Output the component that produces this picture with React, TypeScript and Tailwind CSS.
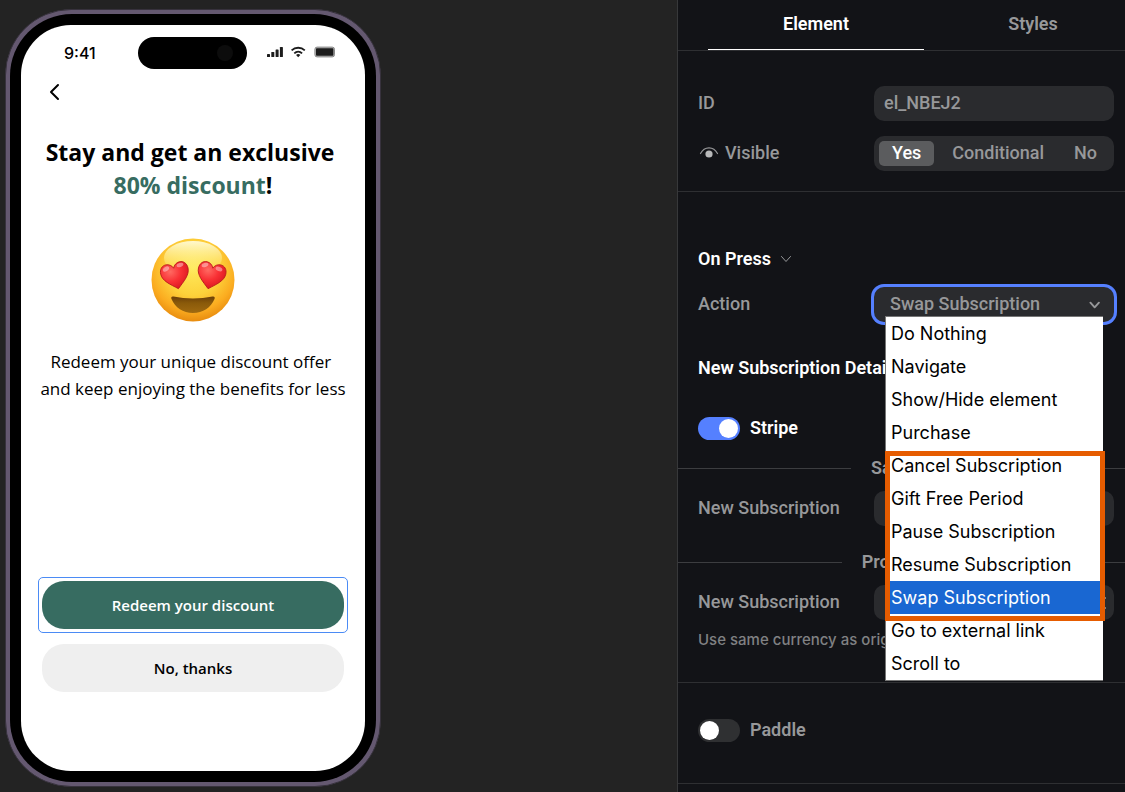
import { useState } from 'react'
import type { ReactNode } from 'react'

const beforeGroup = ['Do Nothing', 'Navigate', 'Show/Hide element', 'Purchase']
const highlighted = [
  'Cancel Subscription',
  'Gift Free Period',
  'Pause Subscription',
  'Resume Subscription',
  'Swap Subscription',
]
const afterGroup = ['Go to external link', 'Scroll to']

function StatusBar() {
  return (
    <div className="flex items-center pt-3 pl-[43px] pr-[29px]">
      <span className="w-[74px] font-['Inter',sans-serif] text-base font-medium text-black">9:41</span>
      <div className="flex h-8 w-[109px] items-center justify-end rounded-full bg-black pr-3.5">
        <div className="size-4 rounded-full bg-[#0c0c0c]" />
      </div>
      <svg className="ml-auto" width="70" height="14" viewBox="0 0 70 14" fill="#1c1c1c">
        <rect x="1" y="8" width="3" height="3" rx="0.6" />
        <rect x="5.3" y="6" width="3" height="5" rx="0.6" />
        <rect x="9.6" y="3.5" width="3" height="7.5" rx="0.6" />
        <rect x="13.9" y="1" width="3" height="10" rx="0.6" />
        <g fill="none" stroke="#1c1c1c" strokeWidth="1.8">
          <path d="M25.6 4.4a9.6 9.6 0 0 1 13.2 0" />
          <path d="M28.3 7.3a5.7 5.7 0 0 1 7.8 0" />
        </g>
        <path d="M32.2 11.2l-2.1-2.1a3 3 0 0 1 4.2 0z" />
        <rect x="48.9" y="1.1" width="19.600" height="9.8" rx="2.2" fill="#b5b5b5" stroke="#8a8a8a" strokeWidth="1" />
        <rect x="50" y="2.2" width="17.400" height="7.6" rx="0.8" />
      </svg>
    </div>
  )
}

function HeartEyes() {
  const heart = 'M0 13C-7 7-14 2-14-5c0-5 3-8 7-8 3 0 6 2 7 5 1-3 4-5 7-5 4 0 7 3 7 8 0 7-7 12-14 18z'
  return (
    <svg width="84" height="84" viewBox="0 0 84 84" role="img" aria-label="Heart eyes">
      <defs>
        <radialGradient id="face" cx="0.5" cy="0.36" r="0.64">
          <stop offset="0" stopColor="#ffe95a" />
          <stop offset="0.5" stopColor="#fdd23b" />
          <stop offset="0.8" stopColor="#fbac20" />
          <stop offset="1" stopColor="#e88c0f" />
        </radialGradient>
        <linearGradient id="shine" x1="0" y1="0" x2="0" y2="1">
          <stop offset="0" stopColor="#fffde0" stopOpacity="0.9" />
          <stop offset="1" stopColor="#fff27a" stopOpacity="0" />
        </linearGradient>
        <radialGradient id="heart" cx="0.35" cy="0.3" r="0.75">
          <stop offset="0" stopColor="#ff6a62" />
          <stop offset="0.5" stopColor="#f93135" />
          <stop offset="1" stopColor="#d9141f" />
        </radialGradient>
        <linearGradient id="mouth" x1="0" y1="0" x2="0" y2="1">
          <stop offset="0" stopColor="#6b3f08" />
          <stop offset="0.4" stopColor="#8a5a0a" />
          <stop offset="1" stopColor="#a06a10" />
        </linearGradient>
      </defs>
      <circle cx="42" cy="42" r="41.5" fill="url(#face)" />
      <ellipse cx="42" cy="20" rx="29" ry="17" fill="url(#shine)" />
      <g fill="url(#heart)" stroke="#b5161b" strokeWidth="0.8">
        <path d={heart} transform="translate(24.500 38) rotate(-13)" />
        <path d={heart} transform="translate(60 38) rotate(13)" />
      </g>
      <g fill="#fff" opacity="0.4">
        <ellipse cx="15" cy="31" rx="3.5" ry="2.2" transform="rotate(-35 15 31)" />
        <ellipse cx="29" cy="27" rx="3.5" ry="2" transform="rotate(-20 29 27)" />
        <ellipse cx="54" cy="27" rx="3.5" ry="2" transform="rotate(-20 54 27)" />
        <ellipse cx="68" cy="31" rx="3.5" ry="2.2" transform="rotate(20 68 31)" />
      </g>
      <path
        d="M20.500 61c-.8-1.600.2-3 2-2.500 12.500 2.600 26.500 2.600 39 0 1.800-.5 2.800.9 2 2.500C60 69.500 52 75 42 75S24 69.500 20.500 61z"
        fill="url(#mouth)"
      />
    </svg>
  )
}

function Phone() {
  return (
    <div className="mt-[9px] ml-[5px] flex w-[376px] shrink-0 rounded-[66px] border border-[#37323d] bg-[#645870] p-1">
      <div className="flex w-full rounded-[62px] bg-black p-[11px]">
        <div className="flex h-[746px] w-full flex-col rounded-[50px] bg-white font-['Open_Sans',sans-serif] text-black">
          <StatusBar />
          <button type="button" aria-label="Back" className="mt-[10px] ml-6 w-5 p-1">
            <svg width="13" height="18" viewBox="0 0 13 18" fill="none" stroke="#000" strokeWidth="2" strokeLinecap="round" strokeLinejoin="round">
              <polyline points="9 2 2 9 9 16" />
            </svg>
          </button>
          <h1 className="mt-[31px] text-center text-[23px] leading-[33px] font-bold">
            Stay and get an exclusive&nbsp;
            <br />
            <span className="text-[#376c61]">80% discount</span>!
          </h1>
          <div className="mt-9 flex justify-center">
            <HeartEyes />
          </div>
          <p className="mt-[26px] text-center text-[17px] leading-[27px]">
            Redeem your unique discount offer&nbsp;
            <br />
            and keep enjoying the benefits for less
          </p>
          <div className="mt-auto mb-[79px] flex flex-col gap-[11px] px-[17px] text-[15px] font-semibold">
            <div className="rounded-[5px] border border-[#4b8bf5] p-[3px]">
              <button type="button" className="h-12 w-full rounded-[22px] bg-[#376c61] text-white">
                Redeem your discount
              </button>
            </div>
            <div className="px-[4px]">
              <button type="button" className="h-12 w-full rounded-[22px] bg-[#efefef]">
                No, thanks
              </button>
            </div>
          </div>
        </div>
      </div>
    </div>
  )
}

function Chevron({ size = 12, width = 2 }: { size?: number; width?: number }) {
  return (
    <svg width={size} height={size} viewBox="0 0 12 12" fill="none" stroke="currentColor" strokeWidth={width} strokeLinecap="round" strokeLinejoin="round">
      <polyline points="1.500 3.500 6 8.500 10.500 3.500" />
    </svg>
  )
}

function Divider({ children }: { children: ReactNode }) {
  return (
    <div className="-mr-5 -ml-5 flex h-6 items-center gap-5 font-semibold">
      <div className="h-px flex-1 bg-[#3c3d40]" />
      <span>{children}</span>
      <div className="h-px flex-1 bg-[#3c3d40]" />
    </div>
  )
}

function Toggle({ label, on, onChange }: { label: string; on: boolean; onChange: (v: boolean) => void }) {
  return (
    <label className={on ? 'flex h-6 items-center gap-[10px] font-semibold text-white' : 'flex h-6 items-center gap-[10px] font-semibold'}>
      <input
        type="checkbox"
        role="switch"
        checked={on}
        onChange={(e) => onChange(e.target.checked)}
        className="flex h-[23px] w-[42px] appearance-none items-center rounded-full bg-[#2f3032] px-[2px] before:block before:size-[19px] before:rounded-full before:bg-white checked:bg-[#5580ff] checked:before:ml-auto"
      />
      {label}
    </label>
  )
}

function SubscriptionRow({ id, children }: { id: string; children?: ReactNode }) {
  return (
    <div className="flex items-center justify-between">
      <label htmlFor={id} className="pb-px">New Subscription</label>
      <div className="flex h-[35px] w-60 items-center rounded-[10px] bg-[#2a2b2e] pr-2">
        <select id={id} className="h-full w-full appearance-none px-4 outline-none" />
        {children}
      </div>
    </div>
  )
}

function ActionMenu({ value, onSelect }: { value: string; onSelect: (v: string) => void }) {
  const option = (name: string) => (
    <button
      key={name}
      type="button"
      role="option"
      aria-selected={name === value}
      onClick={() => onSelect(name)}
      className={
        name === value
          ? 'block h-[33px] w-full bg-[#1967d2] px-[5px] text-left text-white'
          : 'block h-[33px] w-full px-[5px] text-left'
      }
    >
      {name}
    </button>
  )

  return (
    <div
      role="listbox"
      aria-label="Action"
      className="absolute top-[29px] left-[11px] z-10 w-[218px] border border-r-0 border-[#767676] bg-white font-['Inter',sans-serif] text-[18px] font-normal text-black"
    >
      {beforeGroup.map(option)}
      <div className="relative">
        {highlighted.map(option)}
        {/* Frame round the subscription actions */}
        <div className="pointer-events-none absolute top-[2px] -right-[2px] -bottom-[7px] -left-px border-[5px] border-[#e65c00]" />
      </div>
      {afterGroup.map(option)}
    </div>
  )
}

function Panel() {
  const [tab, setTab] = useState('Element')
  const [visible, setVisible] = useState('Yes')
  const [action, setAction] = useState('Swap Subscription')
  const [stripe, setStripe] = useState(true)
  const [paddle, setPaddle] = useState(false)

  return (
    <aside className="w-[448px] shrink-0 overflow-hidden border-l border-[#37383a] bg-[#121317] font-['Roboto',sans-serif] text-[18px] leading-6 font-medium text-[#97989a]">
      <div className="flex gap-px border-b border-[#2e2f32] pl-[30px]">
        {['Element', 'Styles'].map((name) => (
          <button
            key={name}
            type="button"
            onClick={() => setTab(name)}
            className={
              name === tab
                ? 'h-[50px] w-54 shrink-0 border-b border-white pb-px font-semibold text-white'
                : 'h-[50px] w-54 shrink-0 border-b border-transparent pb-px font-semibold'
            }
          >
            {name}
          </button>
        ))}
      </div>

      <section className="flex flex-col gap-[15px] border-b border-[#2e2f32] pt-[35px] pr-[11px] pb-5 pl-5">
        <div className="flex items-center justify-between">
          <label htmlFor="element-id" className="pb-px">ID</label>
          <input id="element-id" defaultValue="el_NBEJ2" className="h-[35px] w-60 rounded-[10px] bg-[#2a2b2e] px-[10px] pb-[2px] outline-none" />
        </div>
        <div className="flex items-center justify-between">
          <span className="flex items-center gap-[5px] pb-px">
            <svg width="22" height="16" viewBox="0 0 22 16" fill="none">
              <path d="M2.500 8.500C4.500 4.700 7.500 2.800 11 2.800s6.500 1.900 8.500 5.700" stroke="currentColor" strokeWidth="1.200" strokeLinecap="round" />
              <circle cx="11" cy="9" r="3.600" fill="#b8b9ba" />
            </svg>
            Visible
          </span>
          <div className="flex h-[35px] w-60 items-center justify-between rounded-[10px] bg-[#2a2b2e] px-[5px]">
            {['Yes', 'Conditional', 'No'].map((name) => (
              <button
                key={name}
                type="button"
                aria-pressed={name === visible}
                onClick={() => setVisible(name)}
                className={
                  name === visible
                    ? 'h-[25px] rounded-[5px] bg-[#5b5c5e] px-[13px] pb-px text-white'
                    : 'h-[25px] rounded-[5px] px-3 pb-px'
                }
              >
                {name}
              </button>
            ))}
          </div>
        </div>
      </section>

      <section className="border-b border-[#2e2f32] pt-[55px] pr-[11px] pb-8 pl-5">
        <button type="button" className="flex h-6 items-center gap-[9px] font-semibold text-white">
          On Press
          <span className="text-[#97989a]">
            <Chevron width={1} />
          </span>
        </button>

        <div className="mt-4 flex items-center justify-between">
          <label htmlFor="action" className="pb-px">Action</label>
          <div className="relative flex h-[35px] w-60 items-center rounded-[10px] bg-[#2a2b2e] pr-[14px] ring-3 ring-[#5580ff]">
            <select
              id="action"
              value={action}
              onChange={(e) => setAction(e.target.value)}
              className="h-full w-full appearance-none pb-px pl-4 outline-none"
            >
              {[...beforeGroup, ...highlighted, ...afterGroup].map((name) => (
                <option key={name}>{name}</option>
              ))}
            </select>
            <Chevron />
            <ActionMenu value={action} onSelect={setAction} />
          </div>
        </div>

        <h2 className="mt-[34px] font-semibold text-white">New Subscription Details</h2>

        <div className="mt-9 mb-4">
          <Toggle label="Stripe" on={stripe} onChange={setStripe} />
        </div>

        <Divider>Sandbox</Divider>
        <div className="mt-[11px] mb-6">
          <SubscriptionRow id="sandbox-subscription" />
        </div>

        <Divider>Production</Divider>
        <div className="mt-[11px]">
          <SubscriptionRow id="production-subscription">
            <svg className="shrink-0" width="14" height="14" viewBox="0 0 14 14" stroke="currentColor" strokeWidth="1.500">
              <path d="M1 2h13M1 12h13" />
            </svg>
          </SubscriptionRow>
        </div>
        <p className="mt-[10px] font-['Inter',sans-serif] text-[15px] leading-5 text-[#808183]">
          Use same currency as original subscription
        </p>
      </section>

      <section className="border-b border-[#2e2f32] px-5 pt-[35px] pb-[41px]">
        <Toggle label="Paddle" on={paddle} onChange={setPaddle} />
      </section>
    </aside>
  )
}

export default function App() {
  return (
    <div className="flex min-h-screen bg-[#232323]">
      <main className="flex flex-1 items-start">
        <Phone />
      </main>
      <Panel />
    </div>
  )
}
